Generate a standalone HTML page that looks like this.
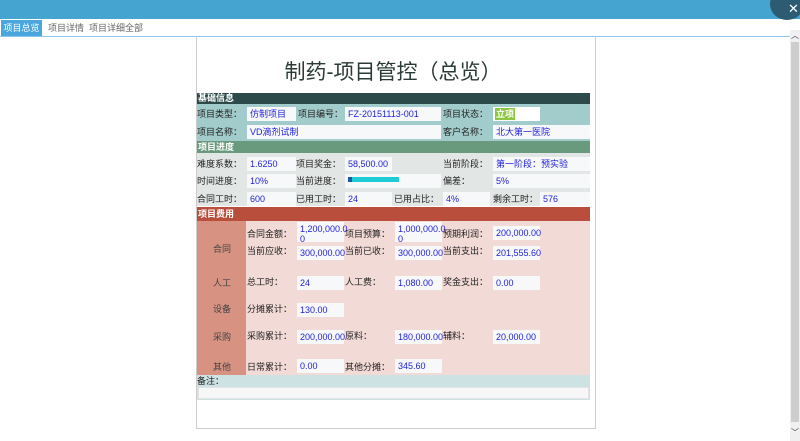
<!DOCTYPE html><html><head><meta charset="utf-8"><style>
*{margin:0;padding:0;box-sizing:border-box}
body{width:800px;height:441px;overflow:hidden;background:#fff;position:relative;font-family:"Liberation Sans","Noto Sans CJK SC",sans-serif;font-size:9px;color:#222}
.a{position:absolute;white-space:nowrap;line-height:10px}
.v{position:absolute;background:#f6f8f9;color:#2222dd;padding:2px 3px;height:14px;line-height:10px;font-size:9px}
.h{position:absolute;left:197px;width:393px;color:#fff;font-weight:bold;font-size:9px;padding-left:1px}
</style></head><body>
<div class="a" style="left:0;top:0;width:800px;height:19px;background:#45a5d0"></div>
<div class="a" style="left:770px;top:-12px;width:34px;height:32px;border-radius:50%;background:#2d5b72"></div>
<div class="a" style="left:788px;top:2px;color:#fff;font-size:13px;line-height:13px">✕</div>
<div class="a" style="left:1px;top:20px;width:41px;height:17px;background:#4aa6dd;color:#fff;line-height:17px;text-align:center">项目总览</div>
<div class="a" style="left:48px;top:20px;line-height:17px;color:#666">项目详情</div>
<div class="a" style="left:89px;top:20px;line-height:17px;color:#666">项目详细全部</div>
<div class="a" style="left:0;top:36px;width:790px;height:1px;background:#8cc8ec"></div>
<div class="a" style="left:196px;top:37px;width:400px;height:392px;border:1px solid #ccc;border-top:none"></div>
<div class="a" style="left:790px;top:30px;width:10px;height:411px;background:#f0f0f0"></div>
<div class="a" style="left:791px;top:42px;width:8px;height:380px;background:#cdcdcd"></div>
<div class="a" style="left:791px;top:31px;font-size:8px;color:#333">︿</div>
<div class="a" style="left:791px;top:428px;font-size:8px;color:#333">﹀</div>
<div class="a" style="left:196px;top:60px;width:394px;text-align:center;font-size:21px;line-height:26px;color:#2a3a36">制药-项目管控（总览）</div>

<div class="h" style="top:93px;height:11px;background:#2d4a4a;line-height:11px">基础信息</div>
<div class="a" style="left:197px;top:104px;width:393px;height:37px;background:#a2cbcb"></div>
<div class="a" style="left:197px;top:109px">项目类型：</div><div class="v" style="left:247px;top:107px;width:49px">仿制项目</div>
<div class="a" style="left:298px;top:109px">项目编号：</div><div class="v" style="left:345px;top:107px;width:96px">FZ-20151113-001</div>
<div class="a" style="left:443px;top:109px">项目状态：</div><div class="v" style="left:493px;top:107px;width:47px;background:#fff"></div>
<div class="a" style="left:495px;top:108px;width:20px;height:12px;background:#8cc63e;color:#fff;font-weight:bold;text-align:center;line-height:12px">立项</div>
<div class="a" style="left:197px;top:127px">项目名称：</div><div class="v" style="left:247px;top:125px;width:194px">VD滴剂试制</div>
<div class="a" style="left:443px;top:127px">客户名称：</div><div class="v" style="left:493px;top:125px;width:97px">北大第一医院</div>

<div class="h" style="top:141px;height:12px;background:#6a9a7e;line-height:12px">项目进度</div>
<div class="a" style="left:197px;top:153px;width:393px;height:53px;background:#e2e6e4"></div>
<div class="a" style="left:197px;top:159px">难度系数：</div><div class="v" style="left:247px;top:157px;width:49px">1.6250</div>
<div class="a" style="left:296px;top:159px">项目奖金：</div><div class="v" style="left:345px;top:157px;width:47px">58,500.00</div>
<div class="a" style="left:443px;top:159px">当前阶段：</div><div class="v" style="left:493px;top:157px;width:97px">第一阶段：预实验</div>
<div class="a" style="left:197px;top:176px">时间进度：</div><div class="v" style="left:247px;top:174px;width:49px">10%</div>
<div class="a" style="left:296px;top:176px">当前进度：</div><div class="v" style="left:345px;top:174px;width:96px"></div>
<div class="a" style="left:348px;top:177px;width:51px;height:5px;background:#1ecad6"></div>
<div class="a" style="left:348px;top:177px;width:4px;height:5px;background:#1c5aa8"></div>
<div class="a" style="left:443px;top:176px">偏差：</div><div class="v" style="left:493px;top:174px;width:97px">5%</div>
<div class="a" style="left:197px;top:194px">合同工时：</div><div class="v" style="left:247px;top:192px;width:49px">600</div>
<div class="a" style="left:296px;top:194px">已用工时：</div><div class="v" style="left:345px;top:192px;width:47px">24</div>
<div class="a" style="left:394px;top:194px">已用占比：</div><div class="v" style="left:443px;top:192px;width:47px">4%</div>
<div class="a" style="left:493px;top:194px">剩余工时：</div><div class="v" style="left:540px;top:192px;width:50px">576</div>

<div class="h" style="top:207px;height:14px;background:#b94e3c;line-height:14px">项目费用</div>
<div class="a" style="left:197px;top:221px;width:393px;height:154px;background:#f2dad6"></div>
<div class="a" style="left:197px;top:221px;width:49px;height:154px;background:#d89282"></div>
<div class="a" style="left:213px;top:244px;color:#444">合同</div>
<div class="a" style="left:213px;top:278px;color:#444">人工</div>
<div class="a" style="left:213px;top:304px;color:#444">设备</div>
<div class="a" style="left:213px;top:332px;color:#444">采购</div>
<div class="a" style="left:213px;top:362px;color:#444">其他</div>
<div class="a" style="left:247px;top:229px">合同金额：</div><div class="v" style="left:297px;top:222px;width:47px;height:20px;white-space:normal">1,200,000.0 0</div>
<div class="a" style="left:345px;top:229px">项目预算：</div><div class="v" style="left:395px;top:222px;width:47px;height:20px;white-space:normal">1,000,000.0 0</div>
<div class="a" style="left:443px;top:229px">预期利润：</div><div class="v" style="left:493px;top:226px;width:47px">200,000.00</div>
<div class="a" style="left:247px;top:246px">当前应收：</div><div class="v" style="left:297px;top:246px;width:47px">300,000.00</div>
<div class="a" style="left:345px;top:246px">当前已收：</div><div class="v" style="left:395px;top:246px;width:47px">300,000.00</div>
<div class="a" style="left:443px;top:246px">当前支出：</div><div class="v" style="left:493px;top:246px;width:47px">201,555.60</div>
<div class="a" style="left:247px;top:277px">总工时：</div><div class="v" style="left:297px;top:276px;width:47px">24</div>
<div class="a" style="left:345px;top:277px">人工费：</div><div class="v" style="left:395px;top:276px;width:47px">1,080.00</div>
<div class="a" style="left:443px;top:277px">奖金支出：</div><div class="v" style="left:493px;top:276px;width:47px">0.00</div>
<div class="a" style="left:247px;top:304px">分摊累计：</div><div class="v" style="left:297px;top:303px;width:47px">130.00</div>
<div class="a" style="left:247px;top:331px">采购累计：</div><div class="v" style="left:297px;top:330px;width:47px">200,000.00</div>
<div class="a" style="left:345px;top:331px">原料：</div><div class="v" style="left:395px;top:330px;width:47px">180,000.00</div>
<div class="a" style="left:443px;top:331px">辅料：</div><div class="v" style="left:493px;top:330px;width:47px">20,000.00</div>
<div class="a" style="left:247px;top:362px">日常累计：</div><div class="v" style="left:297px;top:359px;width:47px">0.00</div>
<div class="a" style="left:345px;top:362px">其他分摊：</div><div class="v" style="left:395px;top:359px;width:47px">345.60</div>
<div class="a" style="left:197px;top:375px;width:393px;height:25px;background:#cde2e2"></div>
<div class="a" style="left:197px;top:376px">备注：</div>
<div class="a" style="left:198px;top:387px;width:391px;height:12px;background:#f7f7f7;border:1px solid #e4e4e4"></div>
</body></html>
